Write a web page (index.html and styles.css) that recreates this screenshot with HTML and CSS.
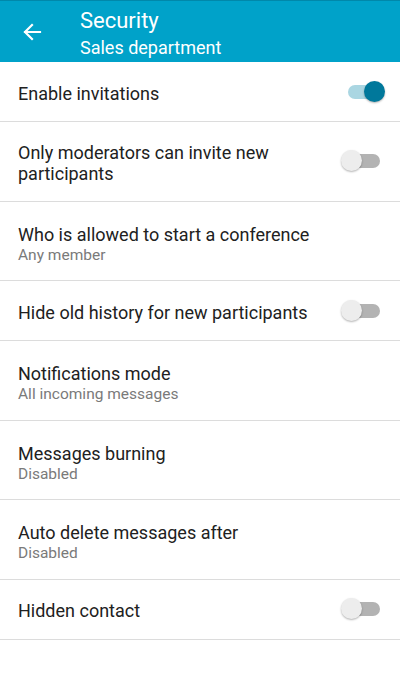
FILE: index.html
```html
<!DOCTYPE html>
<html>
<head>
<meta charset="utf-8">
<link rel="stylesheet" href="styles.css">
</head>
<body>
<header class="appbar">
  <button class="back" aria-label="Back">
    <svg width="20" height="20" viewBox="0 0 20 20"><path d="M18 10H3M10 3L3 10l7 7" fill="none" stroke="#fff" stroke-width="2.2" stroke-linecap="square"/></svg>
  </button>
  <div class="titles">
    <div class="title">Security</div>
    <div class="subtitle">Sales department</div>
  </div>
</header>
<main class="list">
  <div class="row single">
    <div class="text"><div class="label">Enable invitations</div></div>
    <span class="switch on"><span class="track"></span><span class="thumb"></span></span>
  </div>
  <div class="row double">
    <div class="text"><div class="label">Only moderators can invite new participants</div></div>
    <span class="switch"><span class="track"></span><span class="thumb"></span></span>
  </div>
  <div class="row double">
    <div class="text has-value"><div class="label">Who is allowed to start a conference</div><div class="value">Any member</div></div>
  </div>
  <div class="row single">
    <div class="text"><div class="label">Hide old history for new participants</div></div>
    <span class="switch"><span class="track"></span><span class="thumb"></span></span>
  </div>
  <div class="row double">
    <div class="text has-value"><div class="label">Notifications mode</div><div class="value">All incoming messages</div></div>
  </div>
  <div class="row double">
    <div class="text has-value"><div class="label">Messages burning</div><div class="value">Disabled</div></div>
  </div>
  <div class="row double">
    <div class="text has-value"><div class="label">Auto delete messages after</div><div class="value">Disabled</div></div>
  </div>
  <div class="row single">
    <div class="text"><div class="label">Hidden contact</div></div>
    <span class="switch"><span class="track"></span><span class="thumb"></span></span>
  </div>
</main>
</body>
</html>
```
FILE: styles.css
```css
html, body {
  margin: 0;
  padding: 0;
  background: #fff;
  font-family: Roboto, "Noto Sans", sans-serif;
}
.appbar {
  height: 62px;
  box-sizing: border-box;
  background: #00a2c9;
  border-top: 1px solid #0088aa;
  display: flex;
  align-items: center;
  color: #fff;
}
.back {
  width: 80px;
  height: 100%;
  padding: 0 0 0 22px;
  margin: 0;
  border: 0;
  background: none;
  display: flex;
  align-items: center;
  justify-content: flex-start;
}
.titles {
  display: flex;
  flex-direction: column;
  margin-top: 3px;
}
.title {
  font-size: 22px;
  line-height: 26px;
}
.subtitle {
  font-size: 18px;
  line-height: 22px;
  margin-top: 3px;
}
.list {
  display: flex;
  flex-direction: column;
}
.row {
  display: flex;
  align-items: center;
  padding: 0 20px 0 18px;
  border-bottom: 1px solid #dcdcdc;
  box-sizing: border-box;
}
.row.single { height: 60px; }
.row.double { height: 79.5px; }
.text {
  flex: 1;
  min-width: 0;
  padding-top: 3px;
}
.text.has-value { padding-top: 8px; }
.label {
  font-size: 18px;
  line-height: 21px;
  color: #212121;
  padding-right: 20px;
}
.value {
  font-size: 15.5px;
  line-height: 21px;
  color: #7a7a7a;
}
.switch {
  position: relative;
  width: 45px;
  height: 22px;
  flex: none;
  margin-right: -6px;
}
.track {
  position: absolute;
  left: 7px;
  top: 4px;
  width: 32px;
  height: 14px;
  border-radius: 7px;
  background: #b3b3b3;
}
.thumb {
  position: absolute;
  left: 0;
  top: 0;
  width: 21px;
  height: 21px;
  border-radius: 50%;
  background: #ededed;
  box-shadow: 0 1px 2px rgba(0,0,0,0.3);
}
.switch.on .track { background: #aad6e2; }
.switch.on .thumb {
  left: 23px;
  background: #00789b;
}
```
